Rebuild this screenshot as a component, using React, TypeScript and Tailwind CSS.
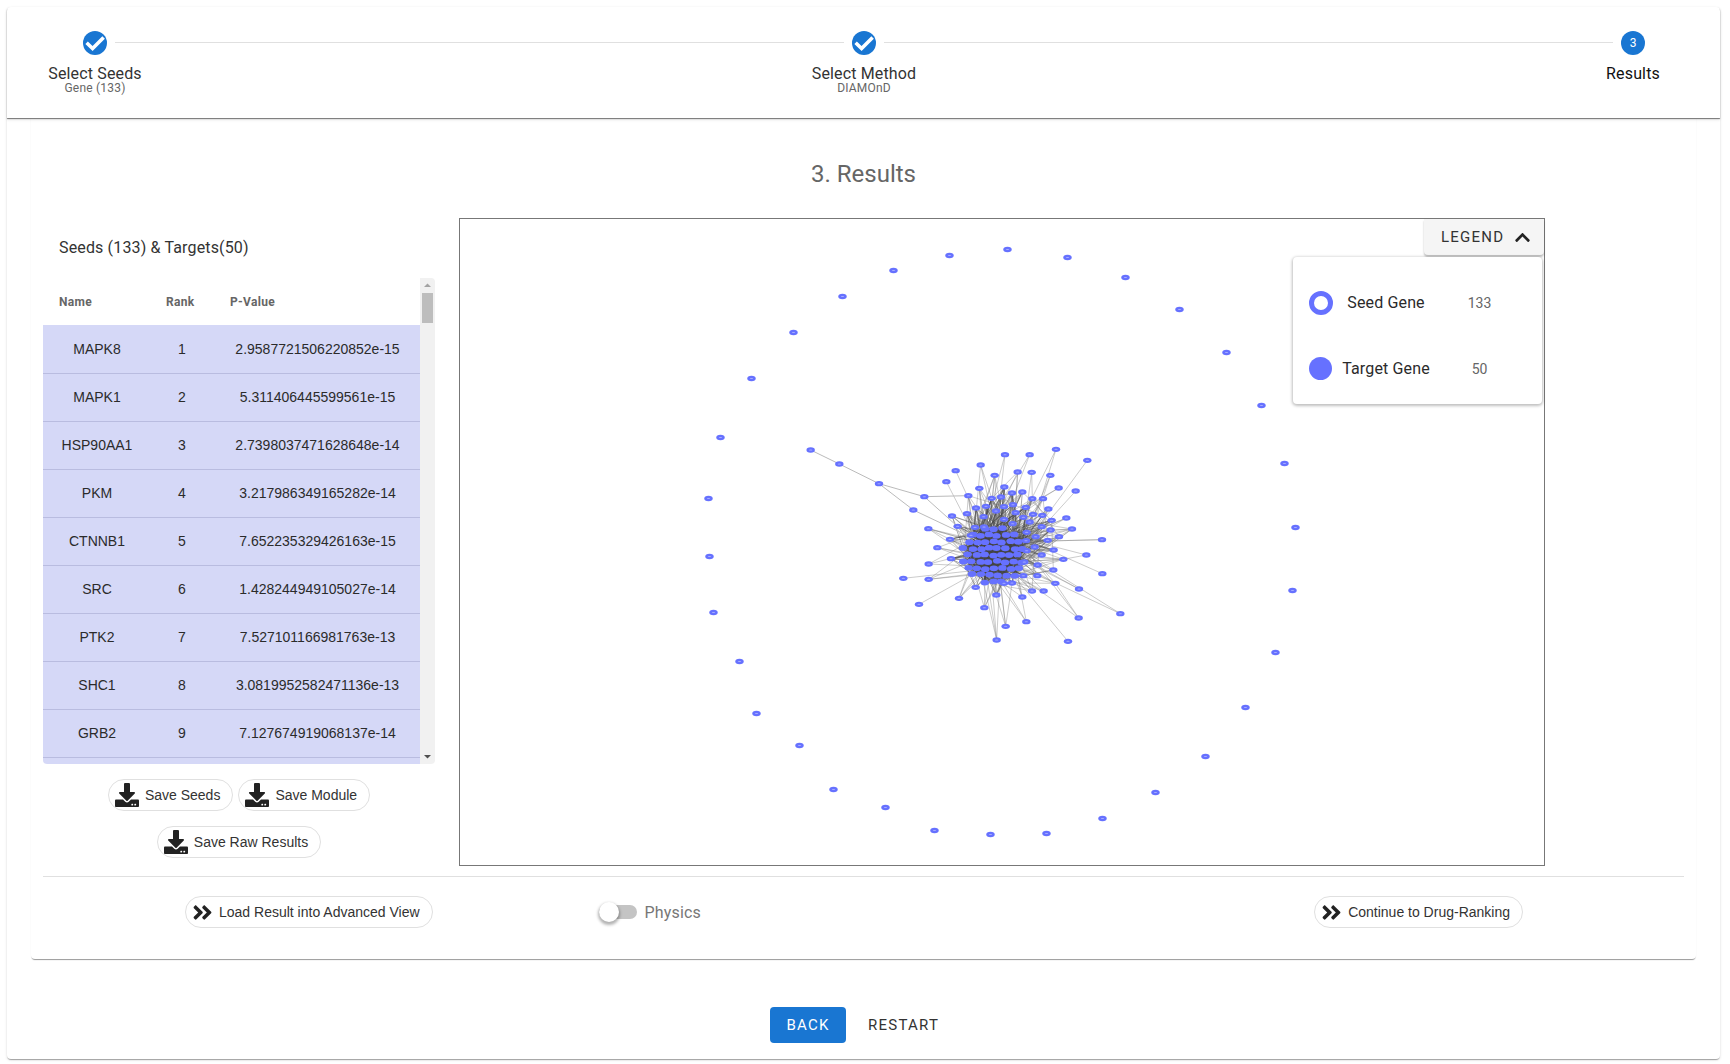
import { FaAngleDoubleRight, FaChevronUp, FaDownload } from "react-icons/fa";

const rows = [
  ["MAPK8", "1", "2.9587721506220852e-15"],
  ["MAPK1", "2", "5.311406445599561e-15"],
  ["HSP90AA1", "3", "2.7398037471628648e-14"],
  ["PKM", "4", "3.217986349165282e-14"],
  ["CTNNB1", "5", "7.652235329426163e-15"],
  ["SRC", "6", "1.428244949105027e-14"],
  ["PTK2", "7", "7.527101166981763e-13"],
  ["SHC1", "8", "3.0819952582471136e-13"],
  ["GRB2", "9", "7.127674919068137e-14"],
];

// outer ring, measured on the screenshot
const ring = [
  [1007, 249], [1067, 257], [1125, 277], [1179, 309], [1226, 352], [1261, 405], [1284, 463], [1295, 527],
  [1292, 590], [1275, 652], [1245, 707], [1205, 756], [1155, 792], [1102, 818], [1046, 833], [990, 834],
  [934, 830], [885, 807], [833, 789], [799, 745], [756, 713], [739, 661], [713, 612], [709, 556],
  [708, 498], [720, 437], [751, 378], [793, 332], [842, 296], [893, 270], [949, 255],
];

// cluster satellites, in 3x crop coordinates
const satellites = [
  [445, 326], [510, 358], [472, 383], [513, 416], [446, 432], [370, 475], [446, 478], [417, 553], [537, 535],
  [587, 502], [613, 563], [649, 525], [650, 660], [677, 619], [739, 605], [727, 531], [756, 513], [791, 513],
  [864, 664], [896, 594], [897, 507], [1021, 581], [967, 461], [919, 405], [966, 359], [876, 327], [859, 294],
  [887, 213], [922, 121], [828, 88], [811, 166], [836, 204], [749, 104], [755, 157], [713, 156], [675, 104],
  [644, 166], [602, 135], [527, 152], [499, 185], [565, 227], [598, 205], [673, 201], [696, 219], [727, 216],
  [757, 236], [789, 236], [805, 267], [787, 286], [815, 301], [812, 330], [837, 350], [803, 361], [821, 390],
  [850, 418], [785, 405], [820, 450], [826, 490], [772, 467], [773, 435], [733, 426], [730, 467], [696, 489],
  [672, 490], [635, 235], [663, 231], [588, 264], [618, 259], [648, 273], [672, 260], [699, 254], [737, 262],
  [707, 278], [672, 298], [611, 290], [561, 281], [516, 288], [533, 319], [585, 322], [612, 321], [573, 346],
  [698, 311], [730, 292], [759, 283], [749, 306], [785, 320], [767, 350], [738, 362], [740, 337], [764, 381],
  [740, 392],
];

const tail = [[92, 90], [178, 132], [297, 191], [433, 230], [400, 270]];
const tailEdges = [[0, 1], [1, 2], [2, 3], [2, 4]];

function rng(seed: number) {
  let s = seed;
  return () => {
    s = (s * 16807) % 2147483647;
    return (s - 1) / 2147483646;
  };
}

const px = (x: number) => 780 + x / 3;
const py = (y: number) => 420 + y / 3;

const rand = rng(4242);

// jittered rows so the packed centre keeps the gaps between its nodes
const core: number[][] = [];
for (let row = -4; row <= 4; row++) {
  for (let col = -4; col <= 4; col++) {
    const x = col * 25 + (row % 2 === 0 ? 0 : 12) + (rand() - 0.5) * 7;
    const y = row * 20 + (rand() - 0.5) * 6;
    if ((x * x) / (100 * 100) + (y * y) / (88 * 88) < 1) core.push([640 + x, 405 + y]);
  }
}

const near = satellites.filter(([x, y]) => Math.hypot(x - 660, y - 370) < 170);

const links: number[][] = [];
satellites.forEach(([x, y]) => {
  const far = Math.hypot(x - 640, y - 405) > 260;
  const n = far ? 1 + Math.floor(rand() * 2) : 3 + Math.floor(rand() * 4);
  for (let i = 0; i < n; i++) {
    const c = core[Math.floor(rand() * core.length)];
    links.push([x, y, c[0], c[1]]);
  }
  const o = satellites[Math.floor(rand() * satellites.length)];
  if (Math.hypot(o[0] - x, o[1] - y) < 150) links.push([x, y, o[0], o[1]]);
});

const coreLinks: number[][] = [];
for (let i = 0; i < 460; i++) {
  const a = core[Math.floor(rand() * core.length)];
  const b = core[Math.floor(rand() * core.length)];
  coreLinks.push([a[0], a[1], b[0], b[1]]);
}
for (let i = 0; i < 170; i++) {
  const a = near[Math.floor(rand() * near.length)];
  const b = core[Math.floor(rand() * core.length)];
  coreLinks.push([a[0], a[1], b[0], b[1]]);
}

function Dot({ x, y }: { x: number; y: number }) {
  return (
    <g>
      <ellipse cx={x} cy={y} rx="4.2" ry="2.7" fill="#6671ff" />
      <ellipse cx={x} cy={y} rx="1.7" ry="0.5" fill="#a9aeff" />
    </g>
  );
}

function Network() {
  return (
    <svg viewBox="460 219 1084 646" className="block w-full h-full">
      {links.map((l, i) => (
        <line key={i} x1={px(l[0])} y1={py(l[1])} x2={px(l[2])} y2={py(l[3])} stroke="#777" strokeOpacity="0.42" strokeWidth="0.9" />
      ))}
      {coreLinks.map((l, i) => (
        <line key={i} x1={px(l[0])} y1={py(l[1])} x2={px(l[2])} y2={py(l[3])} stroke="#444" strokeOpacity="0.45" strokeWidth="1" />
      ))}
      {tailEdges.map(([a, b], i) => (
        <line key={i} x1={px(tail[a][0])} y1={py(tail[a][1])} x2={px(tail[b][0])} y2={py(tail[b][1])} stroke="#bbb" strokeWidth="1" />
      ))}
      <line x1={px(433)} y1={py(230)} x2={px(565)} y2={py(227)} stroke="#bbb" strokeWidth="1" />
      <line x1={px(433)} y1={py(230)} x2={px(600)} y2={py(380)} stroke="#bbb" strokeWidth="1" />
      <line x1={px(400)} y1={py(270)} x2={px(590)} y2={py(360)} stroke="#bbb" strokeWidth="1" />
      {core.map(([x, y], i) => (
        <ellipse key={i} cx={px(x)} cy={py(y)} rx="4.3" ry="2.9" fill="#6671ff" />
      ))}
      {[...satellites, ...tail].map(([x, y], i) => (
        <Dot key={i} x={px(x)} y={py(y)} />
      ))}
      {ring.map(([x, y], i) => (
        <Dot key={i} x={x + 0.5} y={y + 0.5} />
      ))}
    </svg>
  );
}

function CheckIcon() {
  return (
    <svg width="24" height="24" viewBox="0 0 24 24">
      <circle cx="12" cy="12" r="12" fill="#1976d2" />
      <path d="M3.6 11.8 L9.6 17.6 L20.6 6.6" fill="none" stroke="#fff" strokeWidth="3.6" />
    </svg>
  );
}

function Step({ title, sub, done, n }: { title: string; sub?: string; done?: boolean; n?: number }) {
  return (
    <div className="flex flex-col items-center w-10 shrink-0">
      {done ? (
        <CheckIcon />
      ) : (
        <div className="w-6 h-6 rounded-full bg-[#1976d2] text-white text-xs flex items-center justify-center">{n}</div>
      )}
      <div className={`mt-[10px] text-base leading-[18px] tracking-[0.15px] whitespace-nowrap ${done ? "text-[#333]" : "text-[#111]"}`}>{title}</div>
      {sub && <div className="-mt-px text-xs leading-3 tracking-[0.2px] text-[#666] whitespace-nowrap">{sub}</div>}
    </div>
  );
}

function SaveChip({ label }: { label: string }) {
  return (
    <button className="h-8 rounded-full border border-[#e0e0e0] bg-white flex items-center pl-[6px] pr-[12px] gap-[6px] text-sm text-[#333] font-['Liberation_Sans',Arial,sans-serif]">
      <FaDownload size={24} color="#222" />
      {label}
    </button>
  );
}

function GoChip({ label }: { label: string }) {
  return (
    <button className="h-8 rounded-full border border-[#e0e0e0] bg-white flex items-center pl-[5px] pr-[12px] gap-[5px] text-sm text-[#333] font-['Liberation_Sans',Arial,sans-serif]">
      <FaAngleDoubleRight size={23} color="#222" />
      {label}
    </button>
  );
}

export default function App() {
  return (
    <div className="w-[1730px] h-[1064px] bg-white pt-[7px] pl-[7px] font-['Roboto',Arial,sans-serif] overflow-hidden">
      <div className="w-[1713px] h-[1052px] bg-white rounded shadow-[0_2px_1px_-1px_rgba(0,0,0,0.2),0_1px_1px_0_rgba(0,0,0,0.14),0_1px_3px_0_rgba(0,0,0,0.12)]">
        <div className="h-[111px] rounded-t pt-6 pl-[68px] pr-[67px] flex items-start shadow-[0_1px_1px_0_rgba(0,0,0,0.5),0_2px_3px_0_rgba(0,0,0,0.1)]">
          <Step title="Select Seeds" sub="Gene (133)" done />
          <div className="flex-1 h-px bg-[#e0e0e0] mt-[11px]" />
          <Step title="Select Method" sub="DIAMOnD" done />
          <div className="flex-1 h-px bg-[#e0e0e0] mt-[11px]" />
          <Step title="Results" n={3} />
        </div>

        <div className="mx-6 h-[841px] rounded-b shadow-[0_2px_1px_-1px_rgba(0,0,0,0.3),0_1px_1px_0_rgba(0,0,0,0.14)]">
          <h2 className="h-[100px] pt-[40px] text-center text-2xl leading-8 text-[#666]">3. Results</h2>

          <div className="flex items-start gap-6 pl-3">
            <div className="w-[392px]">
              <div className="h-[60px] pl-4 pt-[18px] text-base leading-6 tracking-[0.15px] text-[#333]">Seeds (133) &amp; Targets(50)</div>
              <div className="flex h-[486px] rounded overflow-hidden font-['Liberation_Sans',Arial,sans-serif]">
                <div className="w-[377px] text-sm text-[#2b2b2b]">
                  <div className="grid grid-cols-[108px_62px_207px] h-[48px] items-center text-xs font-bold tracking-[0.3px] text-[#666] border-b border-[#d5d8f7] font-['Roboto',Arial,sans-serif]">
                    <div className="pl-4">Name</div>
                    <div className="pl-[15px]">Rank</div>
                    <div className="pl-[17px]">P-Value</div>
                  </div>
                  {rows.map((r) => (
                    <div key={r[0]} className="grid grid-cols-[108px_62px_207px] h-[48px] pb-px items-center text-center bg-[#d5d8f7] border-b border-[#b9bce0]">
                      <div>{r[0]}</div>
                      <div>{r[1]}</div>
                      <div className="pl-[2px]">{r[2]}</div>
                    </div>
                  ))}
                  <div className="h-[7px] bg-[#d5d8f7]" />
                </div>
                <div className="w-[15px] bg-[#f1f1f1] flex flex-col items-center">
                  <svg width="15" height="15" viewBox="0 0 15 15" className="shrink-0">
                    <path d="M4 9 L7.5 5.5 L11 9 Z" fill="#a3a3a3" />
                  </svg>
                  <div className="w-[11px] h-[30px] bg-[#bdbdbd]" />
                  <svg width="15" height="15" viewBox="0 0 15 15" className="shrink-0 mt-auto">
                    <path d="M4 6 L7.5 9.5 L11 6 Z" fill="#505050" />
                  </svg>
                </div>
              </div>
              <div className="mt-[15px] flex flex-wrap justify-center gap-x-[5px] gap-y-[15px]">
                <SaveChip label="Save Seeds" />
                <SaveChip label="Save Module" />
                <SaveChip label="Save Raw Results" />
              </div>
            </div>

            <div className="relative w-[1086px] h-[648px] border border-[#777]">
              <Network />
              <button className="absolute top-0 right-0 w-[120px] h-9 pl-[17px] bg-[#f5f5f5] rounded-bl rounded-br flex items-center gap-[10px] text-[15px] tracking-[1.25px] text-[#333] shadow-[0_2px_2px_0_rgba(0,0,0,0.25)]">
                LEGEND
                <FaChevronUp size={17} color="#222" />
              </button>
              <div className="absolute top-[38px] right-[2px] w-[249px] h-[147px] bg-white rounded pl-4 pt-[13px] shadow-[0_1px_3px_1px_rgba(0,0,0,0.25)]">
                <div className="grid grid-cols-[24px_106px_81px] h-[65px] items-center text-center">
                  <div className="w-6 h-6 rounded-full border-[5px] border-[#6671ff]" />
                  <div className="text-base tracking-[0.15px] text-[#2b2b2b]">Seed Gene</div>
                  <div className="text-sm text-[#666]">133</div>
                </div>
                <div className="grid grid-cols-[24px_106px_81px] h-[65px] mt-px items-center text-center">
                  <div className="w-[23px] h-[23px] rounded-full bg-[#6671ff]" />
                  <div className="text-base tracking-[0.15px] text-[#2b2b2b]">Target Gene</div>
                  <div className="text-sm text-[#666]">50</div>
                </div>
              </div>
            </div>
          </div>

          <div className="mx-3 mt-[10px] h-px bg-[#e0e0e0]" />

          <div className="flex items-center pl-[154px] pr-[173px] pt-[19px]">
            <GoChip label="Load Result into Advanced View" />
            <div className="ml-[166px] flex items-center gap-2">
              <div className="relative w-[38px] h-[14px] rounded-full bg-[#c4c4c4]">
                <div className="absolute -top-[3px] left-0 w-5 h-5 rounded-full bg-white shadow-[0_2px_3px_1px_rgba(0,0,0,0.3)]" />
              </div>
              <span className="pt-[2px] text-base tracking-[0.15px] text-[#777]">Physics</span>
            </div>
            <div className="ml-auto">
              <GoChip label="Continue to Drug-Ranking" />
            </div>
          </div>
        </div>

        <div className="flex items-center gap-[14px] mt-[48px] ml-[763px]">
          <button className="w-[76px] h-9 rounded bg-[#1976d2] text-white text-[15px] tracking-[1.25px]">BACK</button>
          <button className="h-9 px-2 text-[15px] tracking-[1.25px] text-[#333]">RESTART</button>
        </div>
      </div>
    </div>
  );
}
